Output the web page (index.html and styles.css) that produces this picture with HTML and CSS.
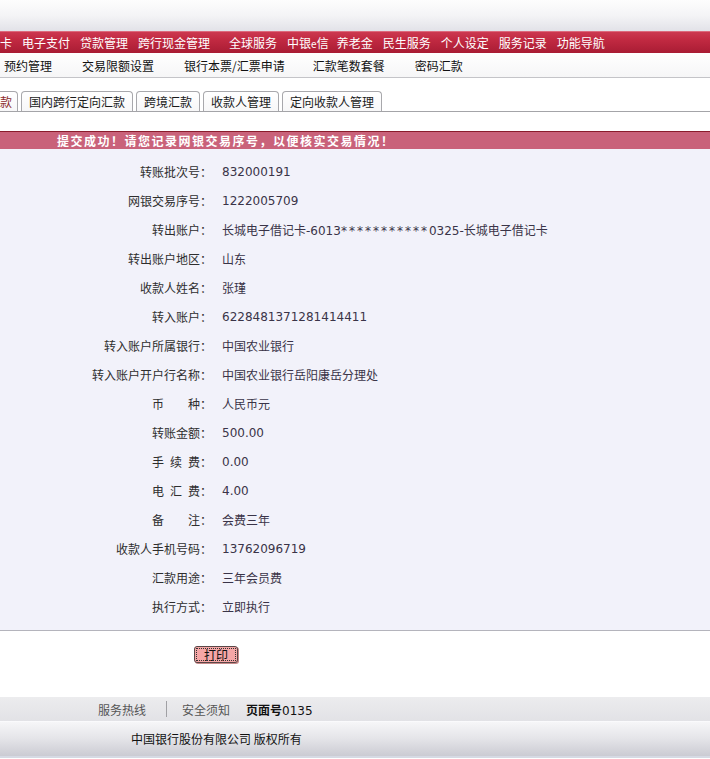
FILE: index.html
```html
<!DOCTYPE html>
<html lang="zh-CN">
<head>
<meta charset="utf-8">
<title>转账结果</title>
<link rel="stylesheet" href="styles.css">
</head>
<body>
<div class="top"></div>
<nav class="mainnav">
  <span>卡</span>
  <span>电子支付</span>
  <span>贷款管理</span>
  <span class="wide">跨行现金管理</span>
  <span>全球服务</span>
  <span class="tight">中银<span class="e">e</span>信</span>
  <span>养老金</span>
  <span>民生服务</span>
  <span>个人设定</span>
  <span>服务记录</span>
  <span>功能导航</span>
</nav>
<nav class="subnav">
  <span>预约管理</span>
  <span>交易限额设置</span>
  <span>银行本票/汇票申请</span>
  <span>汇款笔数套餐</span>
  <span>密码汇款</span>
</nav>
<div class="tabs">
  <span class="tab active">款</span>
  <span class="tab">国内跨行定向汇款</span>
  <span class="tab">跨境汇款</span>
  <span class="tab">收款人管理</span>
  <span class="tab">定向收款人管理</span>
</div>
<div class="notice">提交成功！请您记录网银交易序号，以便核实交易情况！</div>
<div class="detail">
  <div class="row"><span class="label">转账批次号：</span><span class="value">832000191</span></div>
  <div class="row"><span class="label">网银交易序号：</span><span class="value">1222005709</span></div>
  <div class="row"><span class="label">转出账户：</span><span class="value">长城电子借记卡-6013<span class="mask">***********</span>0325-长城电子借记卡</span></div>
  <div class="row"><span class="label">转出账户地区：</span><span class="value">山东</span></div>
  <div class="row"><span class="label">收款人姓名：</span><span class="value">张瑾</span></div>
  <div class="row"><span class="label">转入账户：</span><span class="value">6228481371281414411</span></div>
  <div class="row"><span class="label">转入账户所属银行：</span><span class="value">中国农业银行</span></div>
  <div class="row"><span class="label">转入账户开户行名称：</span><span class="value">中国农业银行岳阳康岳分理处</span></div>
  <div class="row"><span class="label">币　　种：</span><span class="value">人民币元</span></div>
  <div class="row"><span class="label">转账金额：</span><span class="value">500.00</span></div>
  <div class="row"><span class="label">手&ensp;续&ensp;费：</span><span class="value">0.00</span></div>
  <div class="row"><span class="label">电&ensp;汇&ensp;费：</span><span class="value">4.00</span></div>
  <div class="row"><span class="label">备　　注：</span><span class="value">会费三年</span></div>
  <div class="row"><span class="label">收款人手机号码：</span><span class="value">13762096719</span></div>
  <div class="row"><span class="label">汇款用途：</span><span class="value">三年会员费</span></div>
  <div class="row"><span class="label">执行方式：</span><span class="value">立即执行</span></div>
</div>
<div class="actions">
  <button class="print" type="button"><span>打印</span></button>
</div>
<footer class="links">
  <span class="link">服务热线</span>
  <span class="sep"></span>
  <span class="link">安全须知</span>
  <span class="pageno">页面号<span class="num">0135</span></span>
</footer>
<footer class="copy">中国银行股份有限公司 版权所有</footer>
</body>
</html>
```

FILE: styles.css
```css
html, body {
  margin: 0;
  padding: 0;
  background: #ffffff;
}
body {
  width: 710px;
  height: 759px;
  overflow: hidden;
  font-family: "Noto Sans CJK SC", "Liberation Sans", sans-serif;
  font-size: 12px;
  color: #222;
}

.top {
  height: 31px;
  background: linear-gradient(#fdfdfd, #f4f4f6 50%, #e2e2e8);
}

.mainnav {
  height: 22px;
  box-sizing: border-box;
  border-top: 1px solid #dc6a7c;
  background: linear-gradient(#cc3850, #c22a42 35%, #a91c34);
  display: flex;
  gap: 10px;
  align-items: center;
  color: #ffffff;
  line-height: 21px;
  white-space: nowrap;
}
.mainnav .wide {
  margin-right: 9px;
}
.mainnav .tight {
  margin-right: -2px;
}
.mainnav .e {
  font-size: 10px;
  letter-spacing: 0;
}

.subnav {
  height: 25px;
  box-sizing: border-box;
  border-bottom: 1px solid #c4c4c8;
  background: linear-gradient(#ffffff, #f6f6f7);
  display: flex;
  gap: 30px;
  align-items: center;
  padding-left: 4px;
  color: #111;
  white-space: nowrap;
}
.subnav span:nth-child(3) {
  margin-right: -2px;
}

.tabs {
  margin-top: 13px;
  height: 20px;
  border-bottom: 1px solid #a4a4a8;
  display: flex;
  gap: 3px;
  align-items: flex-end;
}
.tab {
  height: 19px;
  line-height: 19px;
  padding: 0 7px;
  border: 1px solid #a8a8ac;
  border-bottom: none;
  border-radius: 4px 4px 0 0;
  background: linear-gradient(#ffffff, #f7f7f8);
  color: #1a1a1a;
  white-space: nowrap;
}
.tab.active {
  padding: 0 5px 0 0;
  border-left: none;
  border-radius: 0 4px 0 0;
  color: #8c2a2a;
}

.notice {
  margin-top: 19px;
  height: 18px;
  box-sizing: border-box;
  border-top: 1px solid #8a1c2c;
  background: #c9627a;
  color: #ffffff;
  font-weight: bold;
  letter-spacing: 1.5px;
  line-height: 17px;
  padding-left: 57px;
  white-space: nowrap;
}

.detail {
  background: #f2f2fa;
  border-bottom: 1px solid #b4b4bc;
  padding: 8px 0 9px;
}
.row {
  display: grid;
  grid-template-columns: 212px 1fr;
  height: 29px;
  align-items: center;
}
.label {
  text-align: right;
  color: #2e2e2e;
  white-space: nowrap;
}
.value {
  padding-left: 10px;
  color: #3a3448;
  font-family: "DejaVu Sans", "Noto Sans CJK SC", sans-serif;
  white-space: nowrap;
}
.value .mask {
  letter-spacing: 2px;
}

.actions {
  height: 66px;
  box-sizing: border-box;
  padding: 15px 0 0 194px;
}
.print {
  width: 44px;
  height: 17px;
  margin: 0;
  padding: 1px;
  border: 1px solid #5a4848;
  border-radius: 3px;
  background: #f6a6a6;
  box-shadow: 1px 1px 0 #c88a8a;
  font-family: "Noto Sans CJK SC", sans-serif;
  font-size: 12px;
  color: #111;
  display: flex;
}
.print span {
  flex: 1;
  border: 1px dotted #333;
  line-height: 11px;
  text-align: center;
}

.links {
  height: 24px;
  background: linear-gradient(#ececee, #e2e2e6);
  display: flex;
  align-items: center;
  padding-left: 98px;
  white-space: nowrap;
}
.links .link {
  color: #555;
}
.links .sep {
  width: 1px;
  height: 16px;
  background: #a0a0a4;
  margin: 0 15px 0 20px;
}
.links .pageno {
  margin-left: 16px;
  color: #111;
  font-weight: bold;
}
.links .num {
  font-family: "DejaVu Sans", sans-serif;
  font-weight: normal;
}

.copy {
  height: 37px;
  box-sizing: border-box;
  border-top: 1px solid #fafafc;
  border-bottom: 2px solid #d6dae4;
  background: linear-gradient(#f6f6f8, #e4e4e8 50%, #cbcbd3);
  padding-left: 131px;
  line-height: 34px;
  color: #111;
  white-space: nowrap;
}
```
